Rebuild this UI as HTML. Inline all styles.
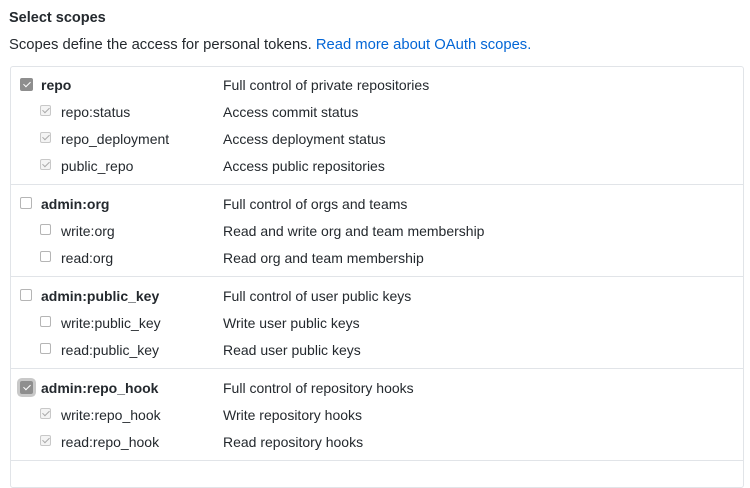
<!DOCTYPE html><html><head><style>
body{margin:0;width:750px;height:467px;overflow:hidden;background:#fff;font-family:"Liberation Sans",sans-serif;color:#24292e;font-size:14px;position:relative}
.a{position:absolute;white-space:nowrap;line-height:16px}
.box{position:absolute;left:10px;top:66px;width:732px;height:420px;border:1px solid #e1e4e8;border-radius:3px}
.hr{position:absolute;left:11px;width:732px;height:1px;background:#e1e4e8}
.cb{position:absolute;width:11px;height:11px;border:1px solid #b5b5b5;border-radius:2px;background:#fff;box-sizing:border-box}
.cb.on{background:#f4f4f4;border-color:#c8c8c8}
.cb.on::after{content:"";position:absolute;left:3px;top:0px;width:3px;height:6px;border:solid #aaa;border-width:0 1.3px 1.3px 0;transform:rotate(45deg)}
.cb.p{width:13px;height:13px;background:#8e8e8e;border-color:#8e8e8e}
.cb.p::after{content:"";position:absolute;left:4px;top:1px;width:3px;height:6px;border:solid #fff;border-width:0 1.5px 1.5px 0;transform:rotate(45deg)}
.cb.f{box-shadow:0 0 0 3px #c9c9c9}
b{font-weight:bold}
</style></head><body>
<div class="a" style="left:9px;top:10px;font-size:14.5px;font-weight:bold">Select scopes</div>
<div class="a" style="left:9px;top:37px;font-size:14.8px">Scopes define the access for personal tokens. <span style="color:#0366d6">Read more about OAuth scopes.</span></div>
<div class="box"></div>
<div class="hr" style="top:184px"></div><div class="hr" style="top:276px"></div><div class="hr" style="top:368px"></div><div class="hr" style="top:460px"></div>

<div class="cb p" style="left:20px;top:78px"></div><div class="a" style="left:41px;top:77px"><b>repo</b></div><div class="a" style="left:223px;top:77px">Full control of private repositories</div>
<div class="cb on" style="left:40px;top:105px"></div><div class="a" style="left:61px;top:104px">repo:status</div><div class="a" style="left:223px;top:104px">Access commit status</div>
<div class="cb on" style="left:40px;top:132px"></div><div class="a" style="left:61px;top:131px">repo_deployment</div><div class="a" style="left:223px;top:131px">Access deployment status</div>
<div class="cb on" style="left:40px;top:159px"></div><div class="a" style="left:61px;top:158px">public_repo</div><div class="a" style="left:223px;top:158px">Access public repositories</div>

<div class="cb" style="left:20px;top:197px;width:12px;height:12px"></div><div class="a" style="left:41px;top:196px"><b>admin:org</b></div><div class="a" style="left:223px;top:196px">Full control of orgs and teams</div>
<div class="cb" style="left:40px;top:224px"></div><div class="a" style="left:61px;top:223px">write:org</div><div class="a" style="left:223px;top:223px">Read and write org and team membership</div>
<div class="cb" style="left:40px;top:251px"></div><div class="a" style="left:61px;top:250px">read:org</div><div class="a" style="left:223px;top:250px">Read org and team membership</div>

<div class="cb" style="left:20px;top:289px;width:12px;height:12px"></div><div class="a" style="left:41px;top:288px"><b>admin:public_key</b></div><div class="a" style="left:223px;top:288px">Full control of user public keys</div>
<div class="cb" style="left:40px;top:316px"></div><div class="a" style="left:61px;top:315px">write:public_key</div><div class="a" style="left:223px;top:315px">Write user public keys</div>
<div class="cb" style="left:40px;top:343px"></div><div class="a" style="left:61px;top:342px">read:public_key</div><div class="a" style="left:223px;top:342px">Read user public keys</div>

<div class="cb p f" style="left:20px;top:381px"></div><div class="a" style="left:41px;top:380px"><b>admin:repo_hook</b></div><div class="a" style="left:223px;top:380px">Full control of repository hooks</div>
<div class="cb on" style="left:40px;top:408px"></div><div class="a" style="left:61px;top:407px">write:repo_hook</div><div class="a" style="left:223px;top:407px">Write repository hooks</div>
<div class="cb on" style="left:40px;top:435px"></div><div class="a" style="left:61px;top:434px">read:repo_hook</div><div class="a" style="left:223px;top:434px">Read repository hooks</div>
</body></html>
